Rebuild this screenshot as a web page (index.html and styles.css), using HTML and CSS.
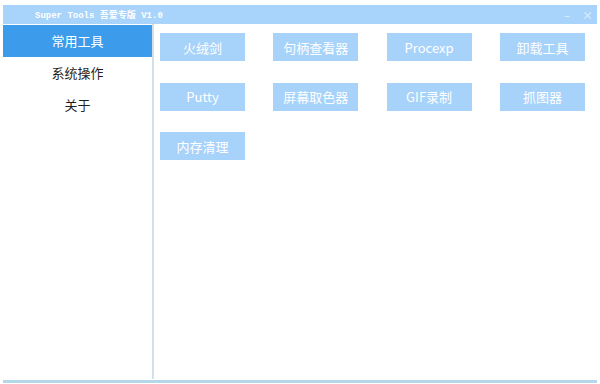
FILE: index.html
```html
<!DOCTYPE html>
<html lang="zh-CN">
<head>
  <meta charset="UTF-8">
  <title>Super Tools</title>
  <link rel="stylesheet" href="styles.css">
</head>
<body>
  <div class="window">
    <header class="titlebar">
      <span class="title">Super Tools 吾爱专版 V1.0</span>
      <span class="controls">
        <span class="ctl">&#8211;</span>
        <span class="ctl">&#215;</span>
      </span>
    </header>
    <div class="main">
      <aside class="sidebar">
        <div class="menu-item active">常用工具</div>
        <div class="menu-item">系统操作</div>
        <div class="menu-item">关于</div>
      </aside>
      <section class="tools">
        <button class="tool">火绒剑</button>
        <button class="tool">句柄查看器</button>
        <button class="tool">Procexp</button>
        <button class="tool">卸载工具</button>
        <button class="tool">Putty</button>
        <button class="tool">屏幕取色器</button>
        <button class="tool">GIF录制</button>
        <button class="tool">抓图器</button>
        <button class="tool">内存清理</button>
      </section>
    </div>
    <div class="statusbar"></div>
  </div>
</body>
</html>
```

FILE: styles.css
```css
body {
  margin: 0;
  background-color: #ffffff;
  font-family: "Noto Sans CJK SC", "Noto Sans", sans-serif;
}

.window {
  width: 594px;
  margin: 5px 3px 0 3px;
}

.titlebar {
  height: 19px;
  background-color: #a8d3fa;
  display: flex;
  align-items: center;
  justify-content: space-between;
  color: #ffffff;
}

.title {
  padding-left: 32px;
  font-family: "Liberation Mono", "Noto Sans CJK SC", monospace;
  font-size: 9px;
  font-weight: bold;
}

.controls {
  display: flex;
  gap: 12px;
  padding-right: 4px;
  font-size: 11px;
  color: #e8f3fe;
}

.main {
  display: flex;
  height: 355px;
}

.sidebar {
  width: 149px;
  padding-top: 1px;
  border-right: 2px solid #cfe0ee;
}

.menu-item {
  height: 32px;
  line-height: 32px;
  text-align: center;
  font-size: 13px;
  color: #1e1e1e;
}

.menu-item.active {
  background-color: #3d9beb;
  color: #ffffff;
}

.tools {
  flex-grow: 1;
  padding: 9px 0 0 6px;
  display: grid;
  grid-template-columns: repeat(4, 85px);
  grid-auto-rows: 28px;
  column-gap: 28.3px;
  row-gap: 21.5px;
  align-content: start;
}

.tool {
  border: none;
  padding: 0;
  background-color: #a7d2fa;
  color: #ffffff;
  font-family: "Noto Sans CJK SC", "Noto Sans", sans-serif;
  font-size: 13px;
}

.statusbar {
  height: 3px;
  margin-top: 1px;
  background-color: #b5d7ea;
}
```
